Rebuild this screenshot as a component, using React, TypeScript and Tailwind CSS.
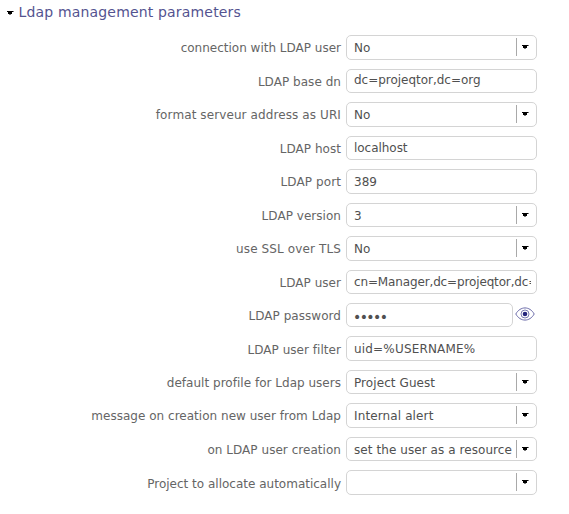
type Field = {
  label: string;
  value: string;
  kind?: "select" | "password";
  labelClass?: string;
  valueClass?: string;
};

const fields: Field[] = [
  { label: "connection with LDAP user", value: "No", kind: "select", labelClass: "pt-[5px] tracking-[0px]" },
  { label: "LDAP base dn", value: "dc=projeqtor,dc=org", valueClass: "pt-[2.6px] tracking-[-0.02px]" },
  { label: "format serveur address as URI", value: "No", kind: "select", labelClass: "pt-[5px] tracking-[0.1px]" },
  { label: "LDAP host", value: "localhost", valueClass: "pt-[3px] tracking-[-0.04px]" },
  { label: "LDAP port", value: "389", labelClass: "pt-[5px] tracking-[0.1px]" },
  { label: "LDAP version", value: "3", kind: "select", valueClass: "pt-[4px]" },
  { label: "use SSL over TLS", value: "No", kind: "select", labelClass: "pt-[5px] tracking-[0.12px]" },
  { label: "LDAP user", value: "cn=Manager,dc=projeqtor,dc=org", valueClass: "pt-[3px] tracking-[-0.14px]" },
  { label: "LDAP password", value: "•••••", kind: "password", valueClass: "pt-[5px] text-[14px] tracking-[-1.6px] -ml-px" },
  { label: "LDAP user filter", value: "uid=%USERNAME%", labelClass: "pt-[5.6px] tracking-[0.04px]", valueClass: "pt-[3.6px] tracking-[0.18px]" },
  { label: "default profile for Ldap users", value: "Project Guest", kind: "select", labelClass: "pt-[5px] tracking-[0.02px]", valueClass: "pt-[4.1px] tracking-[0.08px]" },
  { label: "message on creation new user from Ldap", value: "Internal alert", kind: "select", labelClass: "pt-[5.2px] tracking-[0.02px]", valueClass: "pt-[3.6px] tracking-[0.12px]" },
  { label: "on LDAP user creation", value: "set the user as a resource", kind: "select", valueClass: "pt-[4.2px] tracking-[0.07px]" },
  { label: "Project to allocate automatically", value: "", kind: "select", labelClass: "pt-[5.7px] tracking-[0px]" },
];

function Caret() {
  return (
    <svg width="7" height="4" viewBox="0 0 7 4" className="shrink-0" shapeRendering="crispEdges">
      <path d="M0 0h6v1H5v2H1V1H0z" fill="#000" />
      <path d="M2 3h2v1H2zM6 0h1v1H6z" fill="#777" />
    </svg>
  );
}

function Eye() {
  return (
    <svg width="20" height="14" viewBox="0 0 20 14" fill="none" stroke="#6a6aa8" className="mt-[3.6px] ml-[2px] shrink-0">
      <path d="M.8 7C5.3-1.1 14.7-1.1 19.2 7C14.7 15.1 5.3 15.1.8 7z" />
      <circle cx="10" cy="7" r="4" strokeWidth="0.9" />
      <circle cx="10" cy="7" r="2.3" fill="#25257c" stroke="none" />
    </svg>
  );
}

function Row({ field }: { field: Field }) {
  const { label, value, kind, labelClass = "pt-[5px] tracking-[0.04px]", valueClass = "pt-[3.6px]" } = field;
  return (
    <div className="flex h-[33.45px] items-start">
      <div className={`w-[341px] shrink-0 text-right leading-4 text-[#656565] ${labelClass}`}>{label}</div>
      <div
        className={`ml-[5px] flex h-[24.45px] shrink-0 rounded-[5px] border border-[#d4d4d4] bg-white pl-[7px] ${
          kind === "password" ? "w-[167px]" : "w-[191px]"
        }`}
      >
        <div className={`mr-[5px] min-w-0 flex-1 overflow-hidden leading-4 whitespace-nowrap text-[#505050] ${valueClass}`}>
          {value}
        </div>
        {kind === "select" && (
          <div className="-ml-[5px] mt-[2px] flex h-[18px] w-5 shrink-0 items-center border-l border-[#a9a9a9] pl-[5px]">
            <Caret />
          </div>
        )}
      </div>
      {kind === "password" && <Eye />}
    </div>
  );
}

export default function App() {
  return (
    <main className="h-[514px] w-[569px] overflow-hidden bg-white font-['DejaVu_Sans',sans-serif] text-xs">
      <h1 className="flex h-[35.45px] items-start pt-[2px] pl-[7px] text-[14px] leading-5 tracking-[0.17px] text-[#545390]">
        <span className="mt-[9px] mr-[4.5px]">
          <Caret />
        </span>
        Ldap management parameters
      </h1>
      {fields.map((field) => (
        <Row key={field.label} field={field} />
      ))}
    </main>
  );
}
